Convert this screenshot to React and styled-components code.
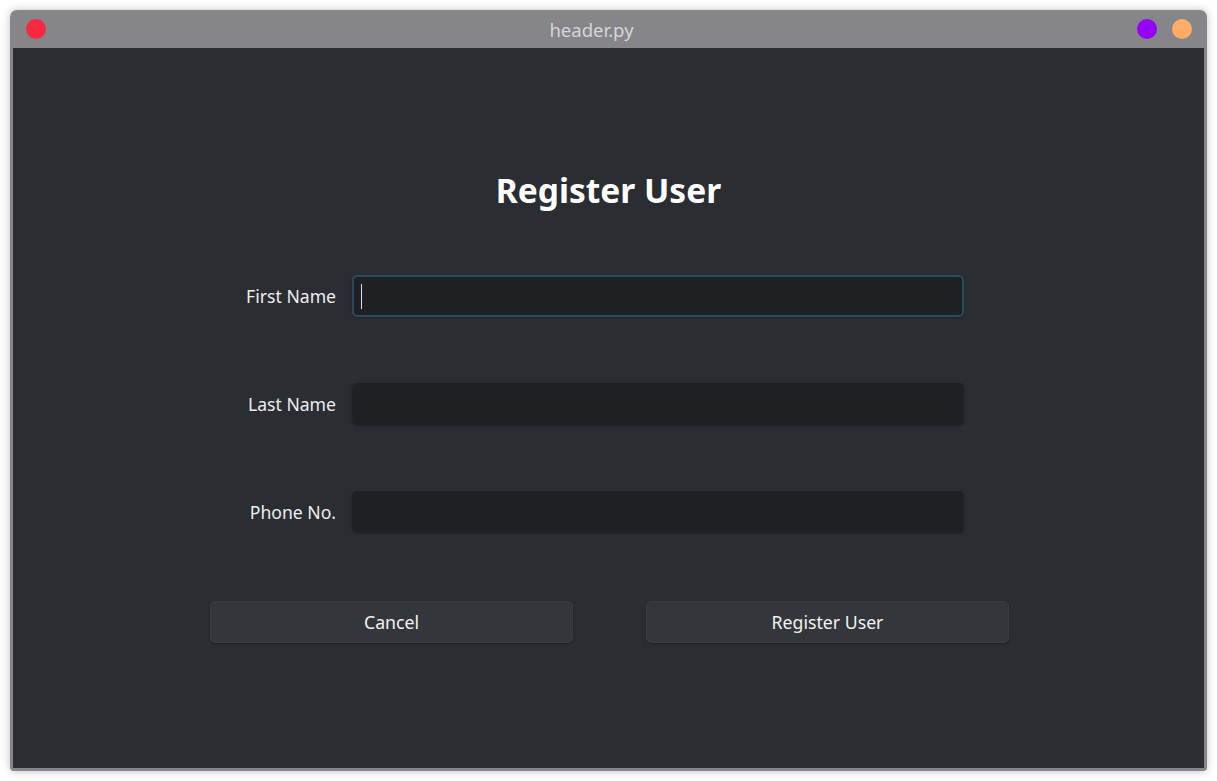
import React from 'react'
import styled, { createGlobalStyle } from 'styled-components'

const GlobalStyle = createGlobalStyle`
  html, body {
    margin: 0;
    padding: 0;
    background: #ffffff;
    font-family: "Noto Sans", "Open Sans", sans-serif;
  }
`

const Page = styled.div`
  width: 1217px;
  height: 781px;
  padding: 10px;
  box-sizing: border-box;
`

const Window = styled.div`
  width: 1197px;
  height: 761px;
  display: flex;
  flex-direction: column;
  background: #86858a;
  border-radius: 7px 7px 4px 4px;
  box-shadow: 0 0 8px rgba(0, 0, 0, 0.25);
  padding: 0 3px 3px 3px;
  box-sizing: border-box;
`

const TitleBar = styled.div`
  height: 38px;
  display: flex;
  align-items: center;
  padding: 0 12px 0 13px;
`

const Dot = styled.span`
  width: 20px;
  height: 20px;
  border-radius: 50%;
  background: ${p => p.color};
  margin-left: ${p => p.gap || 0}px;
`

const TitleText = styled.div`
  flex: 1;
  text-align: center;
  color: #d6d6d8;
  font-size: 18.5px;
`

const Content = styled.div`
  flex: 1;
  background: #2a2d32;
  display: flex;
  flex-direction: column;
  align-items: center;
`

const Heading = styled.h1`
  margin: 120px 0 0 0;
  font-size: 33.5px;
  font-weight: 700;
  line-height: 44px;
  color: #ffffff;
`

const Form = styled.div`
  margin-top: 63px;
  margin-left: -7px;
  display: grid;
  grid-template-columns: 90px 612px;
  column-gap: 16px;
  row-gap: 66px;
  align-items: center;
`

const Label = styled.label`
  color: #eeeeee;
  font-size: 17.6px;
  text-align: right;
  white-space: nowrap;
`

const Field = styled.div`
  height: 42px;
  box-sizing: border-box;
  background: #1e2023;
  border-radius: 5px;
  border: 2px solid ${p => (p.focused ? '#2a4a60' : '#1f2124')};
  box-shadow: 0 1px 2px rgba(0, 0, 0, 0.25);
  display: flex;
  align-items: center;
  padding-left: 7px;
`

const Caret = styled.span`
  width: 1px;
  height: 25px;
  background: #dcdcdc;
`

const Buttons = styled.div`
  margin-top: 68px;
  margin-left: 2px;
  display: flex;
  gap: 73px;
`

const Button = styled.button`
  width: 363px;
  height: 42px;
  background: #33373b;
  border: 1px solid #3a3e42;
  border-radius: 5px;
  box-shadow: 0 1px 2px rgba(0, 0, 0, 0.35);
  color: #f2f2f2;
  font-family: "Noto Sans", "Open Sans", sans-serif;
  font-size: 17.7px;
`

const fields = [
  { label: 'First Name', focused: true },
  { label: 'Last Name' },
  { label: 'Phone No.' },
]

export default function App() {
  return (
    <>
      <GlobalStyle />
      <Page>
        <Window>
          <TitleBar>
            <Dot color="#f7283f" />
            <TitleText>header.py</TitleText>
            <Dot color="#9500f6" />
            <Dot color="#ffad66" gap={15} />
          </TitleBar>
          <Content>
            <Heading>Register User</Heading>
            <Form>
              {fields.map(f => (
                <React.Fragment key={f.label}>
                  <Label>{f.label}</Label>
                  <Field focused={f.focused}>{f.focused && <Caret />}</Field>
                </React.Fragment>
              ))}
            </Form>
            <Buttons>
              <Button>Cancel</Button>
              <Button>Register User</Button>
            </Buttons>
          </Content>
        </Window>
      </Page>
    </>
  )
}
